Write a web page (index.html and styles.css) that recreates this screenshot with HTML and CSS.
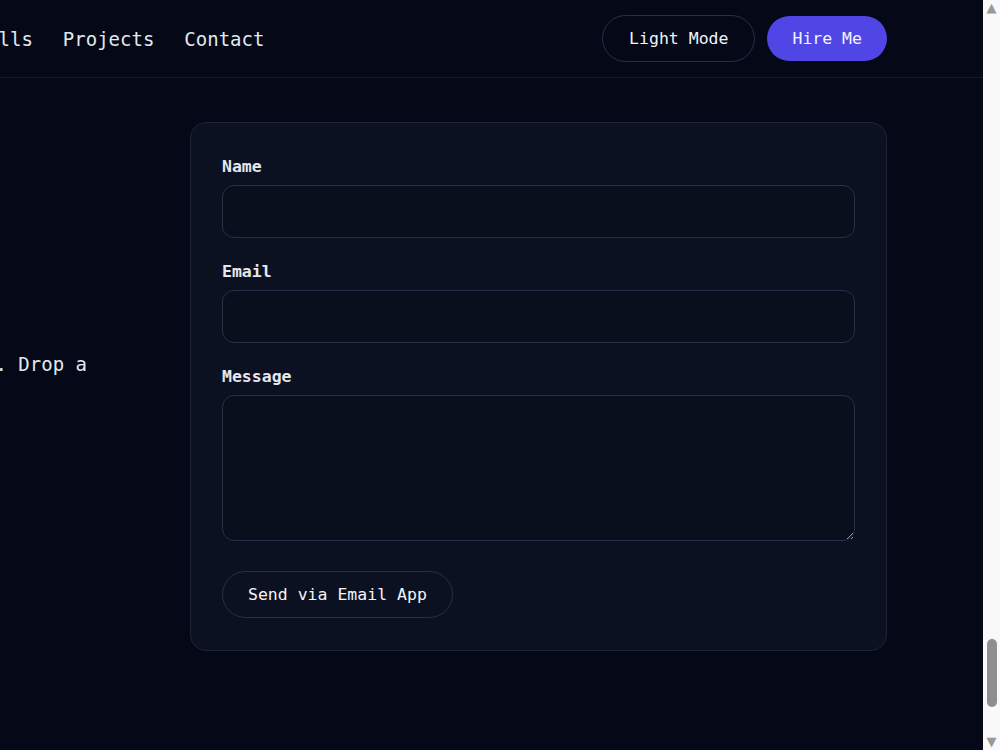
FILE: index.html
```html
<!DOCTYPE html>
<html lang="en">
<head>
  <meta charset="UTF-8"/>
  <meta name="viewport" content="width=device-width, initial-scale=1.0"/>
  <title>Portfolio</title>
  <link rel="stylesheet" href="styles.css">
</head>
<body>

  <div class="window">
    <div class="page">

      <!-- Header -->
      <header class="header">
        <div class="shell">
          <nav class="container nav">
            <a class="logo" href="#home">arjun.dev</a>
            <div class="nav-links">
              <a href="#home">Home</a>
              <a href="#about">About</a>
              <a href="#skills">Skills</a>
              <a href="#projects">Projects</a>
              <a href="#contact">Contact</a>
            </div>
            <div class="nav-actions">
              <button class="btn btn-outline">Light Mode</button>
              <button class="btn btn-primary">Hire Me</button>
            </div>
          </nav>
        </div>
      </header>

      <!-- Contact -->
      <section id="contact" class="contact">
        <div class="shell">
          <div class="container contact-grid">
            <div class="contact-info">
              <h2>Get In Touch</h2>
              <p>Open to freelance work and full-time roles. Drop a message.</p>
              <ul class="contact-list">
                <li>hello@arjun.dev</li>
                <li>Bengaluru, IN</li>
              </ul>
            </div>

            <form class="contact-card" onsubmit="return false;">
              <div class="field">
                <label for="name">Name</label>
                <input type="text" id="name">
              </div>
              <div class="field">
                <label for="email">Email</label>
                <input type="email" id="email">
              </div>
              <div class="field">
                <label for="message">Message</label>
                <textarea id="message"></textarea>
              </div>
              <button class="btn btn-outline" type="submit">Send via Email App</button>
            </form>
          </div>
        </div>
      </section>

    </div>

    <!-- Scrollbar -->
    <div class="scrollbar">
      <span class="arrow">▲</span>
      <div class="track"><span class="thumb"></span></div>
      <span class="arrow">▼</span>
    </div>
  </div>

</body>
</html>
```

FILE: styles.css
```css
body {
  margin: 0;
  background-color: #050816;
  color: #e2e8f0;
  font-family: "DejaVu Sans Mono", monospace;
}

a {
  color: inherit;
  text-decoration: none;
}

.window {
  display: flex;
  height: 750px;
  overflow: hidden;
}

.page {
  flex: 1;
  overflow: hidden;
}

/* right-aligned shell, wide content overflows to the left */
.shell {
  display: flex;
  justify-content: flex-end;
  padding-right: 96px;
}

.container {
  flex: 0 0 1372px;
}

/* Header */
.header {
  background-color: #050816;
  border-bottom: 1px solid #141a2c;
}

.nav {
  display: flex;
  align-items: center;
  height: 77px;
}

.logo {
  font-size: 22px;
  font-weight: bold;
}

.nav-links {
  display: flex;
  gap: 30px;
  margin-left: 167px;
  font-size: 19px;
}

.nav-actions {
  display: flex;
  align-items: center;
  gap: 12px;
  margin-left: auto;
}

.btn {
  font-family: inherit;
  font-size: 16.5px;
  line-height: 21px;
  padding: 12px 26px;
  border-radius: 999px;
  cursor: pointer;
  color: #f1f5f9;
}

.btn-outline {
  background: none;
  border: 1px solid #273046;
}

.btn-primary {
  background-color: #4f46e5;
  border: none;
  padding: 12px 25px;
}

/* Contact */
.contact {
  padding: 44px 0 100px;
}

.contact-grid {
  display: grid;
  grid-template-columns: 1fr 697px;
  gap: 48px;
}

.contact-info {
  align-self: center;
}

.contact-info h2 {
  font-size: 36px;
  margin: 0 0 20px;
}

.contact-info p {
  font-size: 19px;
  line-height: 28px;
  margin: 0;
}

.contact-list {
  list-style: none;
  margin: 22px 0 0;
  padding: 0;
  font-size: 16px;
  line-height: 28px;
  color: #94a3b8;
}

.contact-card {
  background-color: #0c1121;
  border: 1px solid #1c2436;
  border-radius: 16px;
  padding: 32px 31px;
}

.field {
  margin-bottom: 22px;
}

.field label {
  display: block;
  font-size: 16.5px;
  font-weight: bold;
  line-height: 24px;
  margin-bottom: 6px;
}

.field input,
.field textarea {
  display: block;
  width: 100%;
  box-sizing: border-box;
  height: 53px;
  padding: 14px 16px;
  background-color: #0a0f1e;
  border: 1px solid #273046;
  border-radius: 12px;
  color: #e2e8f0;
  font-family: inherit;
  font-size: 16px;
}

.field textarea {
  height: 146px;
}

.contact-card .btn {
  margin-top: 8px;
  padding: 12px 25px;
}

/* Scrollbar */
.scrollbar {
  flex: 0 0 17px;
  display: flex;
  flex-direction: column;
  align-items: center;
  background-color: #f9f9f9;
}

.arrow {
  font-family: "DejaVu Sans", sans-serif;
  font-size: 13px;
  line-height: 16px;
  color: #999999;
}

.track {
  flex: 1;
  display: flex;
  flex-direction: column;
  justify-content: flex-end;
  padding-bottom: 27px;
}

.thumb {
  width: 10px;
  height: 68px;
  border-radius: 5px;
  background-color: #8f8f8f;
}
```
